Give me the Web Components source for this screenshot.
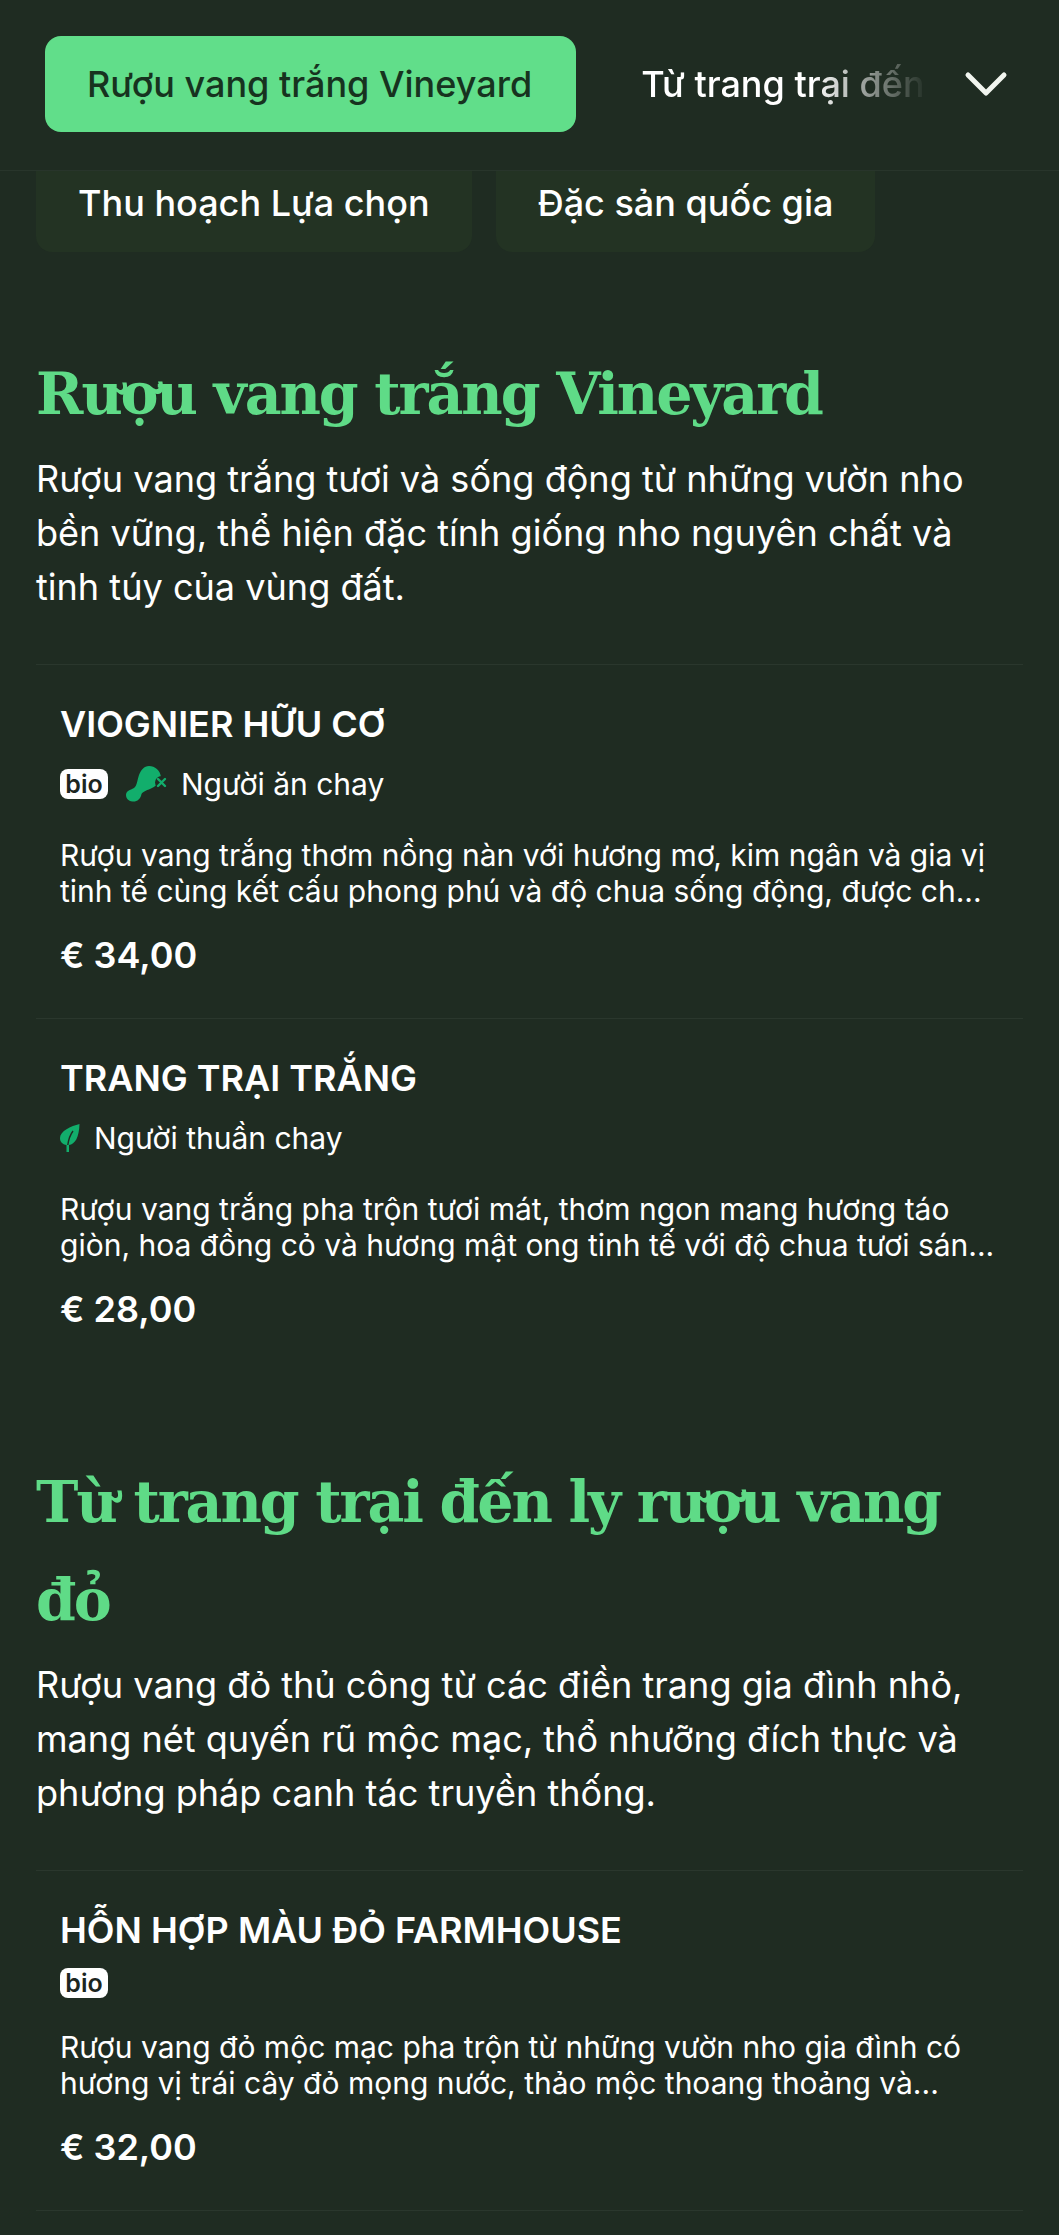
<!DOCTYPE html>
<html lang="vi">
<head>
<meta charset="utf-8">
<title>Menu</title>
<style>
    html, body { margin: 0; padding: 0; height: 2235px; overflow: hidden; background: #1f2c22; }
    body { font-family: Inter, "Noto Sans", sans-serif; color: #fff; }
</style>
</head>
<body>
<menu-app>
    <menu-header slot="header">
        <span slot="active">Rượu vang trắng Vineyard</span>
        <span slot="next">Từ trang trại đến ly rượu vang đỏ</span>
    </menu-header>
    <menu-chips>
        <menu-chip>Thu hoạch Lựa chọn</menu-chip>
        <menu-chip>Đặc sản quốc gia</menu-chip>
    </menu-chips>

    <menu-section>
        <span slot="title">Rượu vang trắng Vineyard</span>
        <span slot="desc">Rượu vang trắng tươi và sống động từ những vườn nho bền vững, thể hiện đặc tính giống nho nguyên chất và tinh túy của vùng đất.</span>
        <menu-item name="Viognier hữu cơ" price="€ 34,00">
            <bio-badge slot="tags"></bio-badge>
            <diet-tag slot="tags" kind="vegetarian">Người ăn chay</diet-tag>
            Rượu vang trắng thơm nồng nàn với hương mơ, kim ngân và gia vị tinh tế cùng kết cấu phong phú và độ chua sống động, được ch...
        </menu-item>
        <menu-item name="Trang trại trắng" price="€ 28,00">
            <diet-tag slot="tags" kind="vegan">Người thuần chay</diet-tag>
            Rượu vang trắng pha trộn tươi mát, thơm ngon mang hương táo giòn, hoa đồng cỏ và hương mật ong tinh tế với độ chua tươi sán...
        </menu-item>
    </menu-section>

    <menu-section>
        <span slot="title">Từ trang trại đến ly rượu vang đỏ</span>
        <span slot="desc">Rượu vang đỏ thủ công từ các điền trang gia đình nhỏ, mang nét quyến rũ mộc mạc, thổ nhưỡng đích thực và phương pháp canh tác truyền thống.</span>
        <menu-item name="Hỗn hợp màu đỏ Farmhouse" price="€ 32,00" divider>
            <bio-badge slot="tags"></bio-badge>
            Rượu vang đỏ mộc mạc pha trộn từ những vườn nho gia đình có hương vị trái cây đỏ mọng nước, thảo mộc thoang thoảng và...
        </menu-item>
    </menu-section>
</menu-app>

<script>
// small helper so each class only has to write its template once
function shadow(el, html) {
    const t = document.createElement('template');
    t.innerHTML = html;
    el.attachShadow({mode: 'open'}).appendChild(t.content.cloneNode(true));
}

class MenuApp extends HTMLElement {
    constructor() {
        super();
        shadow(this, `
<style>
    :host { display: flex; flex-direction: column; }
</style>
<slot name="header"></slot>
<slot></slot>`);
    }
}

class MenuHeader extends HTMLElement {
    constructor() {
        super();
        shadow(this, `
<style>
    :host {
        display: flex;
        align-items: center;
        box-sizing: border-box;
        height: 171px;
        padding: 0 45px 2px;
        background: #1f2c22;
        border-bottom: 1px solid #28352b;
        position: relative;
        z-index: 2;
        font-size: 36px;
        font-weight: 500;
    }
    .active {
        flex: none;
        box-sizing: border-box;
        height: 96px;
        padding: 0 44px 0 42px;
        display: flex;
        align-items: center;
        border-radius: 16px;
        background: #61de8a;
        color: #17331f;
    }
    .next {
        flex: 1;
        min-width: 0;
        margin-left: 65px;
        white-space: nowrap;
        overflow: hidden;
        -webkit-mask-image: linear-gradient(to right, #000 60%, transparent 100%);
        mask-image: linear-gradient(to right, #000 60%, transparent 100%);
    }
    svg { flex: none; width: 44px; height: 27px; margin-left: 36px; margin-right: 6px; }
</style>
<span class="active"><slot name="active"></slot></span>
<span class="next"><slot name="next"></slot></span>
<svg viewBox="0 0 44 27" fill="none" stroke="#f1f5ef" stroke-width="5" stroke-linecap="round" stroke-linejoin="round"><path d="M4 4 L22 22 L40 4"/></svg>`);
    }
}

class MenuChips extends HTMLElement {
    constructor() {
        super();
        shadow(this, `
<style>
    :host { display: flex; gap: 24px; padding: 0 36px; margin: -17px 0 12px; }
</style>
<slot></slot>`);
    }
}

class MenuChip extends HTMLElement {
    constructor() {
        super();
        shadow(this, `
<style>
    :host {
        display: flex;
        align-items: center;
        box-sizing: border-box;
        height: 98px;
        padding: 0 42px;
        border-radius: 16px;
        background: #233323;
        font-size: 36px;
        font-weight: 500;
    }
</style>
<slot></slot>`);
    }
}

class MenuSection extends HTMLElement {
    constructor() {
        super();
        shadow(this, `
<style>
    :host { display: block; padding: 79px 36px 0; }
    h2 {
        margin: 0;
        padding-top: 2px;
        font-family: "DejaVu Serif", serif;
        font-size: 57px;
        letter-spacing: -2.100px;
        line-height: 98px;
        font-weight: 700;
        color: #5fdb87;
    }
    p {
        margin: 9px 0 50px;
        font-size: 36.100px;
        line-height: 54px;
    }
</style>
<h2><slot name="title"></slot></h2>
<p><slot name="desc"></slot></p>
<slot></slot>`);
    }
}

class MenuItem extends HTMLElement {
    constructor() {
        super();
        shadow(this, `
<style>
    :host {
        display: block;
        padding: 39px 24px 41px 24px;
        border-top: 1px solid #2a372d;
    }
    :host([divider]) { border-bottom: 1px solid #2a372d; }
    h3 {
        margin: 0;
        font-size: 36px;
        line-height: 40px;
        font-weight: 600;
        text-transform: uppercase;
    }
    .tags { display: flex; align-items: center; gap: 18px; margin-top: 20px; }
    .desc {
        margin-top: 33px;
        font-size: 30px;
        line-height: 36px;
    }
    .price {
        margin-top: 24px;
        font-size: 36px;
        line-height: 44px;
        font-weight: 600;
    }
</style>
<h3></h3>
<div class="tags"><slot name="tags"></slot></div>
<div class="desc"><slot></slot></div>
<div class="price"></div>`);
    }

    connectedCallback() {
        this.shadowRoot.querySelector('h3').textContent = this.getAttribute('name');
        this.shadowRoot.querySelector('.price').textContent = this.getAttribute('price');
    }
}

class BioBadge extends HTMLElement {
    constructor() {
        super();
        shadow(this, `
<style>
    :host {
        display: flex;
        align-items: center;
        justify-content: center;
        width: 48px;
        height: 30px;
        margin: -2px 0;
        border-radius: 8px;
        background: #fff;
        color: #1c261f;
        font-size: 25px;
        font-weight: 600;
    }
</style>
bio`);
    }
}

const DIET_ICONS = {
    vegetarian: `<svg width="41" height="36" viewBox="0 0 41 36">
        <path fill="#12ae6c" d="M23 0 C29 0 34 4 35 11 C34 16 30 20 26 22 C22 24 17 25.500 15.500 28 C14.500 33 11 36 6.500 35.500 C2 35 0 32 0 29 C0 25 4 24 8 22 C11 20 11 15 13 9 C15 4 18 0 23 0 Z"/>
        <circle cx="35.500" cy="16.500" r="6.500" fill="#1f2c22"/>
        <path fill="none" stroke="#12ae6c" stroke-width="2.400" stroke-linecap="round" d="M32 13 L39 20 M39 13 L32 20"/>
    </svg>`,
    vegan: `<svg width="20" height="28" viewBox="0 0 20 28">
        <path fill="#12ae6c" d="M19.500 0 C11 2 0 7 0 14 C0 18 2.500 20.500 6.500 21 L6.500 28 L9 28 L9 21 C15 20 19 14 19.500 0 Z"/>
        <path fill="none" stroke="#1f2c22" stroke-width="1.400" d="M7.800 21 C8.500 16 10 11 13 7"/>
    </svg>`
};

class DietTag extends HTMLElement {
    constructor() {
        super();
        shadow(this, `
<style>
    :host { display: flex; align-items: center; gap: 14px; font-size: 30px; line-height: 40px; }
    span { display: flex; }
</style>
<span></span>
<slot></slot>`);
    }

    connectedCallback() {
        this.shadowRoot.querySelector('span').innerHTML = DIET_ICONS[this.getAttribute('kind')];
    }
}

customElements.define('menu-app', MenuApp);
customElements.define('menu-header', MenuHeader);
customElements.define('menu-chips', MenuChips);
customElements.define('menu-chip', MenuChip);
customElements.define('menu-section', MenuSection);
customElements.define('menu-item', MenuItem);
customElements.define('bio-badge', BioBadge);
customElements.define('diet-tag', DietTag);
</script>
</body>
</html>
